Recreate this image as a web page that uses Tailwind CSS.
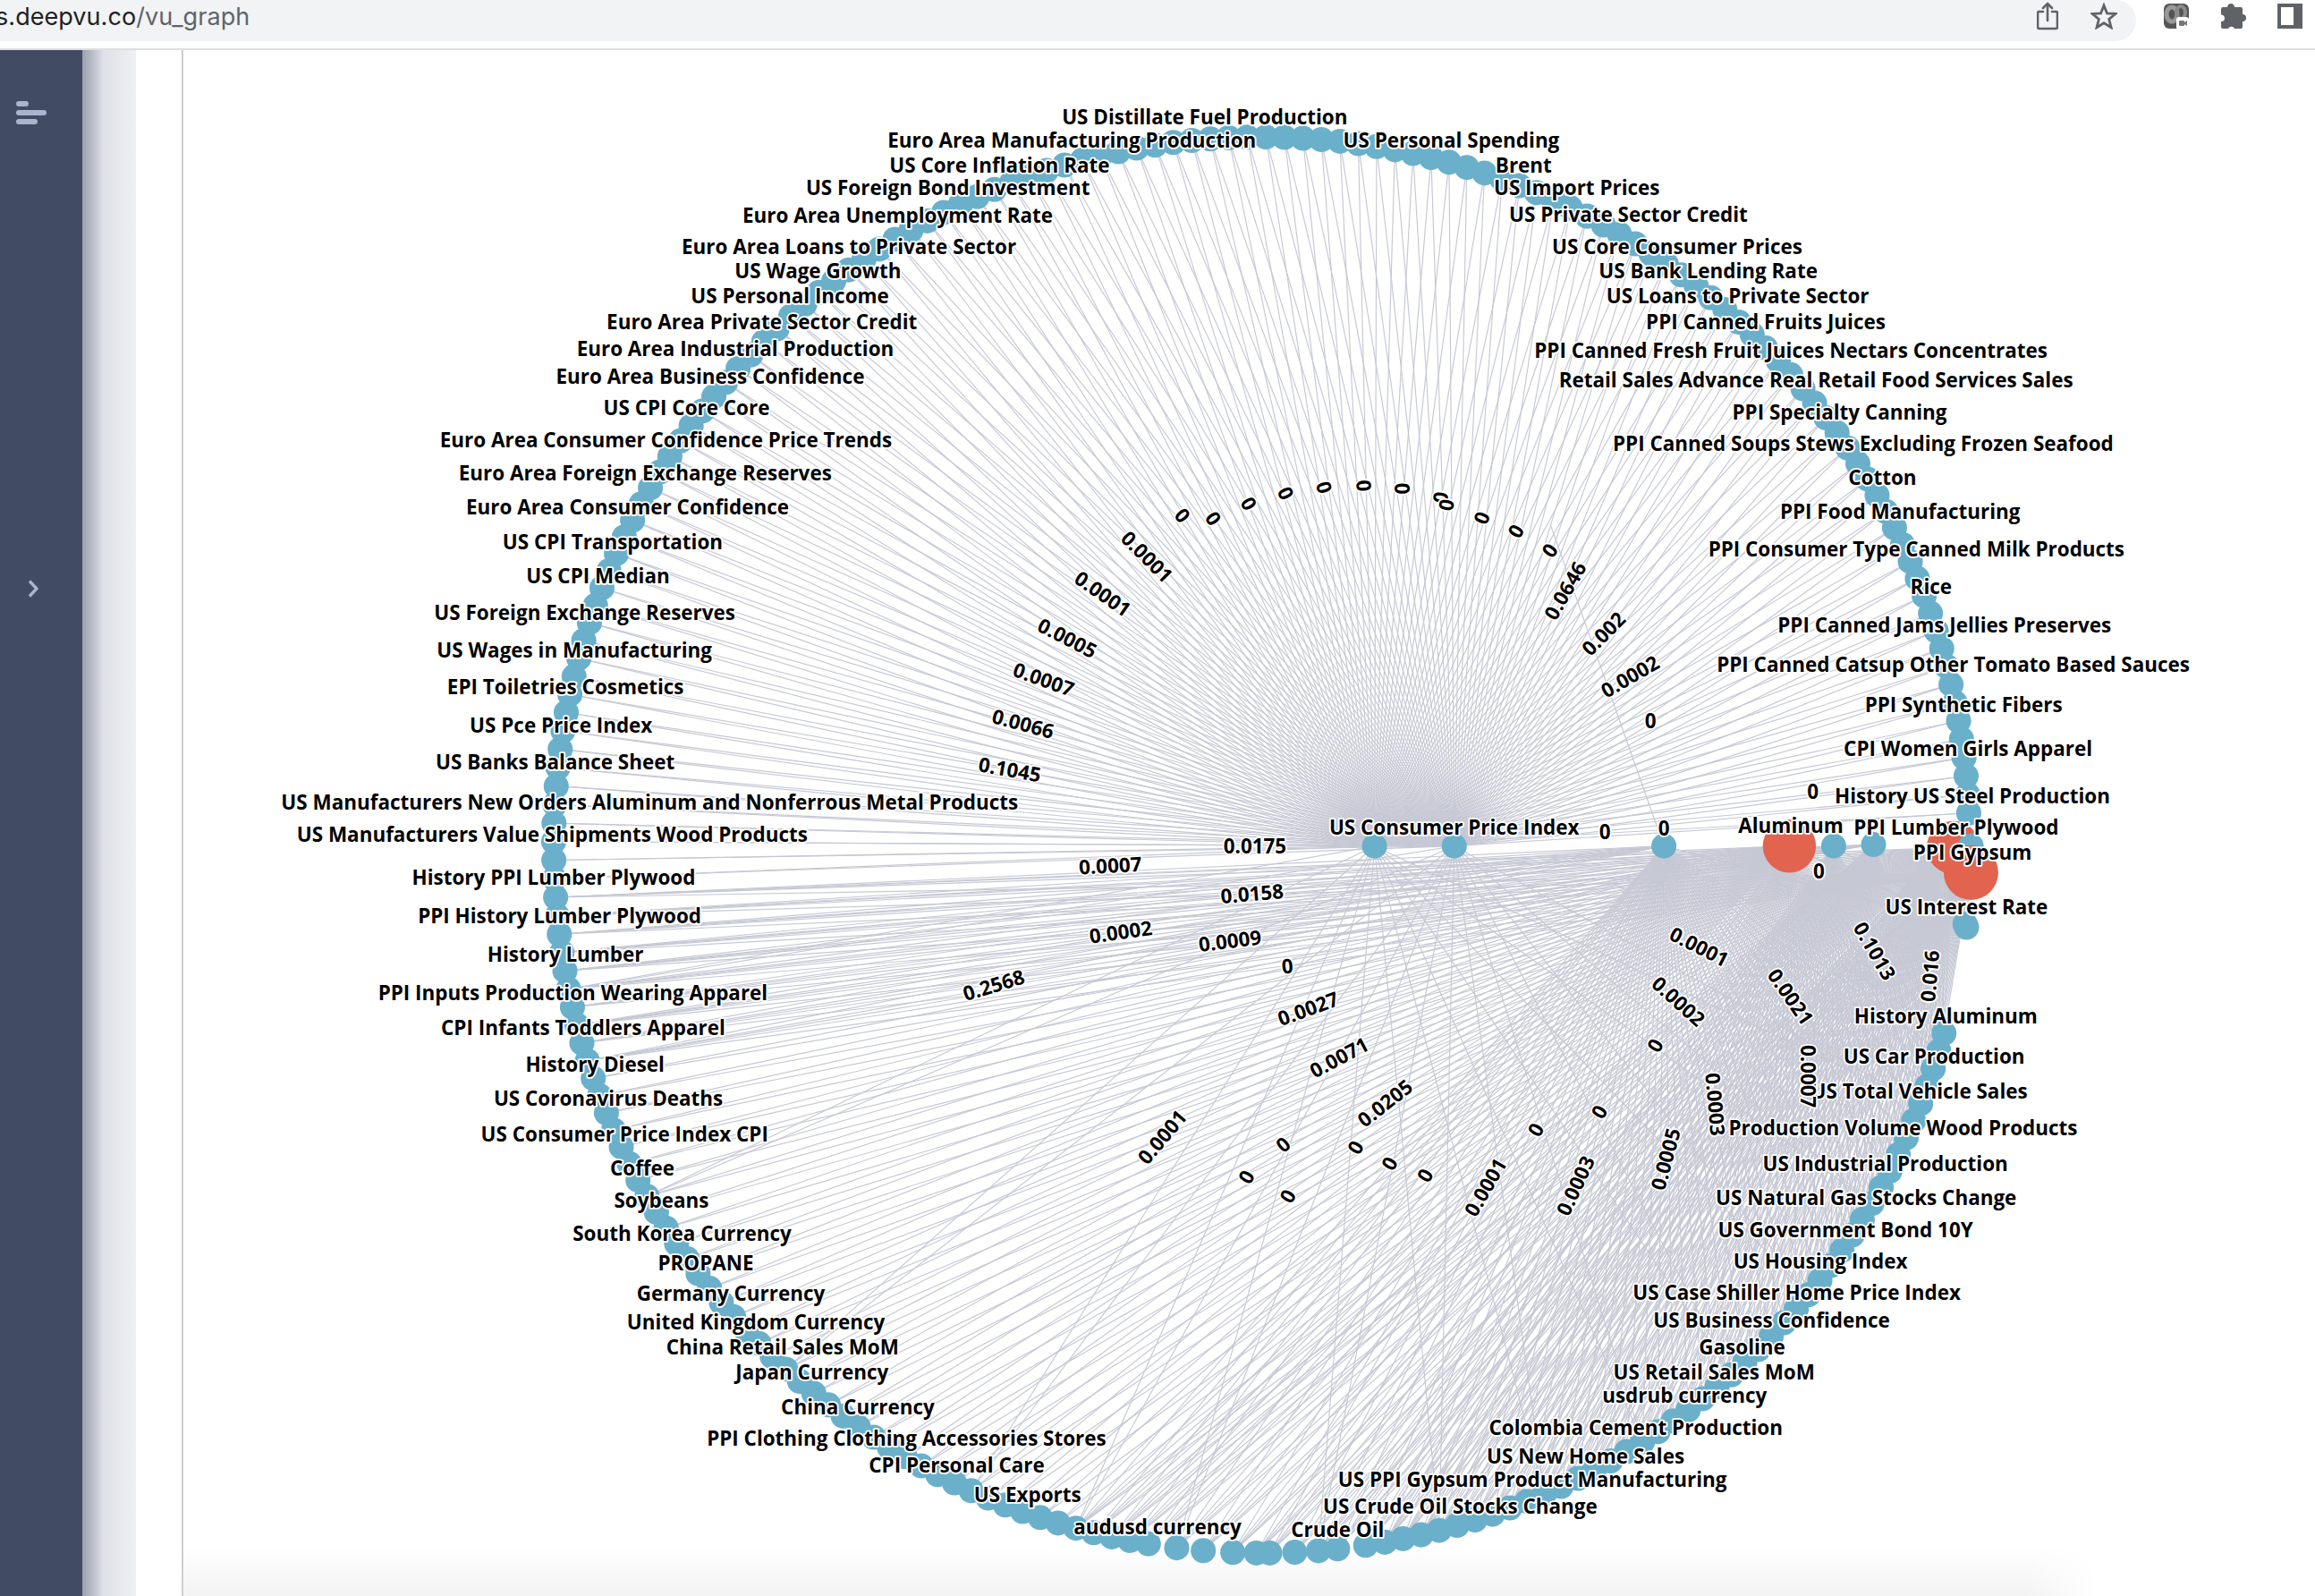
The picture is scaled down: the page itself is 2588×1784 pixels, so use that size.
<!DOCTYPE html>
<html lang="en">
<head>
<meta charset="utf-8">
<title>vu_graph</title>
<script src="https://cdn.jsdelivr.net/npm/@tailwindcss/browser@4"></script>
</head>
<body class="bg-white overflow-hidden">
<div class="flex flex-col w-[2588px] h-[1784px] overflow-hidden">
  <header class="h-[56px] shrink-0 bg-white border-b-2 border-[#dedede] flex pb-[8px]">
    <div class="w-[2388px] h-[46px] bg-[#f1f3f4] rounded-r-[23px] flex items-center justify-between overflow-hidden">
      <div class="text-[27px] leading-[36px] -ml-[5px] -mt-[8px] tracking-[0.05px] text-[#5f6368] font-['Inter',sans-serif] whitespace-nowrap"><span class="text-[#202124]">s.deepvu.co</span>/vu_graph</div>
      <div class="flex items-center gap-[36px] pr-[21px] -mt-[10px]">
        <svg width="24" height="32" viewBox="0 0 24 32" fill="none" class="text-[#5f6368]" stroke="currentColor" stroke-width="2.6" stroke-linecap="round" stroke-linejoin="round"><path d="M7 11H2.500a1.500 1.500 0 0 0-1.500 1.500V28a2 2 0 0 0 2 2h18a2 2 0 0 0 2-2V12.500A1.500 1.500 0 0 0 21.500 11H17"/><path d="M12 21V2M7 7l5-5 5 5"/></svg>
        <svg width="30" height="30" viewBox="0 0 30 30" fill="none" class="text-[#5f6368]" stroke="currentColor" stroke-width="2.8" stroke-linejoin="miter"><path d="M15 3l3.500 8.800 9.500.6-7.300 6.100 2.400 9.200L15 22.700 7 27.700l2.400-9.200-7.300-6.100 9.500-.6z"/></svg>
      </div>
    </div>
    <div class="flex-1 flex items-start pt-[4px] pl-[30px] gap-[36px]">
      <svg width="30" height="30" viewBox="0 0 30 30"><rect x="1" y="0" width="28" height="28" rx="6" fill="#555"/><ellipse cx="10" cy="12" rx="6" ry="8" fill="none" stroke="#999" stroke-width="5"/><ellipse cx="20" cy="10" rx="5" ry="7" fill="none" stroke="#8a8a8a" stroke-width="4"/><rect x="15" y="15" width="14" height="14" rx="3" fill="#fff"/><rect x="18" y="19" width="6" height="6" rx="1" fill="#777"/><path d="M24 21l3-2v6l-3-2z" fill="#777"/></svg>
      <svg width="30" height="30" viewBox="0 0 30 30" class="text-[#5f6368] -ml-[2px]"><path fill="currentColor" d="M12 0c2.500 0 4 1.800 4 4h7a2 2 0 0 1 2 2v6a4 4 0 1 1 0 8v6a2 2 0 0 1-2 2h-7a3.800 3.800 0 0 0-7 0H3a2 2 0 0 1-2-2v-6c3 0 4-2 4-3.500S4 12.500 1 12.500V6a2 2 0 0 1 2-2h5c0-2.200 1.500-4 4-4z"/></svg>
      <div class="w-[28px] h-[28px] bg-[#5f6368] pl-[4px] pt-[4px] -ml-[2px]"><div class="w-[14px] h-[20px] bg-white"></div></div>
    </div>
  </header>
  <div class="flex-1 flex min-h-0">
    <aside class="w-[92px] shrink-0 bg-[#414c63] flex flex-col items-start pl-[18px] pt-[57px]">
      <svg width="34" height="26" viewBox="0 0 34 26" fill="#a9b4cf"><rect width="14" height="6" rx="3"/><rect y="10" width="34" height="6" rx="3"/><rect y="20" width="24" height="6" rx="3"/></svg>
      <svg width="12" height="20" viewBox="0 0 12 20" fill="none" stroke="#a9b4cf" stroke-width="3.400" class="mt-[509px] ml-[13px]"><path d="M2 1.500L10 10 2 18.500"/></svg>
    </aside>
    <div class="w-[60px] shrink-0 bg-linear-to-r from-[#9aa0af] via-[#dfe1e8] via-40% to-[#eef0f4]"></div>
    <div class="w-[51px] shrink-0 bg-white"></div>
    <main class="flex-1 relative border-l-2 border-[#cfcfcf] overflow-hidden">
      <div class="absolute bottom-0 left-0 w-[2140px] h-[56px] bg-linear-to-b from-white to-[#f3f3f3]"></div>
      <div class="absolute bottom-0 left-[2060px] w-[80px] h-[56px] bg-linear-to-r from-transparent to-white"></div>
      <svg class="absolute left-0 top-0 w-[2383px] h-[1728px]" viewBox="124.2 33.93 1443.8 1047">
        <g id="edges" fill="none" stroke="#c6c8d4" stroke-width="0.7"></g>
        <g id="nodes" fill="#6bb0ca"></g>
        <g class="fill-black stroke-white [stroke-width:2.2] [paint-order:stroke] [stroke-linejoin:round] [text-anchor:middle] [dominant-baseline:central] text-[13.6px] font-bold font-['Open_Sans',sans-serif]">
          <g>
            <text x="816" y="79">US Distillate Fuel Production</text>
            <text x="726" y="95">Euro Area Manufacturing Production</text>
            <text x="983" y="95">US Personal Spending</text>
            <text x="677" y="112">US Core Inflation Rate</text>
            <text x="1032" y="112">Brent</text>
            <text x="642" y="127">US Foreign Bond Investment</text>
            <text x="1068" y="127">US Import Prices</text>
            <text x="608" y="146">Euro Area Unemployment Rate</text>
            <text x="1103" y="145">US Private Sector Credit</text>
            <text x="575" y="167">Euro Area Loans to Private Sector</text>
            <text x="1136" y="167">US Core Consumer Prices</text>
            <text x="554" y="183">US Wage Growth</text>
            <text x="1157" y="183">US Bank Lending Rate</text>
            <text x="535" y="200">US Personal Income</text>
            <text x="1177" y="200">US Loans to Private Sector</text>
            <text x="516" y="218">Euro Area Private Sector Credit</text>
            <text x="1196" y="218">PPI Canned Fruits Juices</text>
            <text x="498" y="236">Euro Area Industrial Production</text>
            <text x="1213" y="237">PPI Canned Fresh Fruit Juices Nectars Concentrates</text>
            <text x="481" y="255">Euro Area Business Confidence</text>
            <text x="1230" y="257">Retail Sales Advance Real Retail Food Services Sales</text>
            <text x="465" y="276">US CPI Core Core</text>
            <text x="1246" y="279">PPI Specialty Canning</text>
            <text x="451" y="298">Euro Area Consumer Confidence Price Trends</text>
            <text x="1262" y="300">PPI Canned Soups Stews Excluding Frozen Seafood</text>
            <text x="437" y="320">Euro Area Foreign Exchange Reserves</text>
            <text x="1275" y="323">Cotton</text>
            <text x="425" y="343">Euro Area Consumer Confidence</text>
            <text x="1287" y="346">PPI Food Manufacturing</text>
            <text x="415" y="367">US CPI Transportation</text>
            <text x="1298" y="372">PPI Consumer Type Canned Milk Products</text>
            <text x="405" y="390">US CPI Median</text>
            <text x="1308" y="397">Rice</text>
            <text x="396" y="415">US Foreign Exchange Reserves</text>
            <text x="1317" y="423">PPI Canned Jams Jellies Preserves</text>
            <text x="389" y="440">US Wages in Manufacturing</text>
            <text x="1323" y="450">PPI Canned Catsup Other Tomato Based Sauces</text>
            <text x="383" y="465">EPI Toiletries Cosmetics</text>
            <text x="1330" y="477">PPI Synthetic Fibers</text>
            <text x="380" y="491">US Pce Price Index</text>
            <text x="1333" y="507">CPI Women Girls Apparel</text>
            <text x="376" y="516">US Banks Balance Sheet</text>
            <text x="1336" y="539">History US Steel Production</text>
            <text x="440" y="543">US Manufacturers New Orders Aluminum and Nonferrous Metal Products</text>
            <text x="374" y="565">US Manufacturers Value Shipments Wood Products</text>
            <text x="375" y="594">History PPI Lumber Plywood</text>
            <text x="379" y="620">PPI History Lumber Plywood</text>
            <text x="383" y="646">History Lumber</text>
            <text x="388" y="672">PPI Inputs Production Wearing Apparel</text>
            <text x="395" y="696">CPI Infants Toddlers Apparel</text>
            <text x="403" y="721">History Diesel</text>
            <text x="412" y="744">US Coronavirus Deaths</text>
            <text x="423" y="768">US Consumer Price Index CPI</text>
            <text x="435" y="791">Coffee</text>
            <text x="448" y="813">Soybeans</text>
            <text x="462" y="835">South Korea Currency</text>
            <text x="478" y="855">PROPANE</text>
            <text x="495" y="876">Germany Currency</text>
            <text x="512" y="895">United Kingdom Currency</text>
            <text x="530" y="912">China Retail Sales MoM</text>
            <text x="550" y="929">Japan Currency</text>
            <text x="581" y="953">China Currency</text>
            <text x="614" y="974">PPI Clothing Clothing Accessories Stores</text>
            <text x="648" y="992">CPI Personal Care</text>
            <text x="696" y="1012">US Exports</text>
            <text x="784" y="1034">audusd currency</text>
            <text x="906" y="1036">Crude Oil</text>
            <text x="989" y="1020">US Crude Oil Stocks Change</text>
            <text x="1038" y="1002">US PPI Gypsum Product Manufacturing</text>
            <text x="1074" y="986">US New Home Sales</text>
            <text x="1108" y="967">Colombia Cement Production</text>
            <text x="1141" y="945">usdrub currency</text>
            <text x="1161" y="929">US Retail Sales MoM</text>
            <text x="1180" y="912">Gasoline</text>
            <text x="1200" y="894">US Business Confidence</text>
            <text x="1217" y="875">US Case Shiller Home Price Index</text>
            <text x="1233" y="854">US Housing Index</text>
            <text x="1250" y="833">US Government Bond 10Y</text>
            <text x="1264" y="811">US Natural Gas Stocks Change</text>
            <text x="1277" y="788">US Industrial Production</text>
            <text x="1289" y="764">Production Volume Wood Products</text>
            <text x="1300" y="739">US Total Vehicle Sales</text>
            <text x="1310" y="715">US Car Production</text>
            <text x="1318" y="688">History Aluminum</text>
            <text x="1332" y="614">US Interest Rate</text>
            <text x="1325" y="560">PPI Lumber Plywood</text>
            <text x="1336" y="577">PPI Gypsum</text>
            <text x="1213" y="559">Aluminum</text>
            <text x="985" y="560">US Consumer Price Index</text>
            <text x="1127" y="561">0</text>
          </g>
          <g>
            <text x="801" y="349" transform="rotate(50 801 349)">0</text>
            <text x="822" y="351" transform="rotate(55 822 351)">0</text>
            <text x="846" y="341" transform="rotate(60 846 341)">0</text>
            <text x="871" y="334" transform="rotate(65 871 334)">0</text>
            <text x="897" y="330" transform="rotate(75 897 330)">0</text>
            <text x="924" y="329" transform="rotate(85 924 329)">0</text>
            <text x="950" y="331" transform="rotate(90 950 331)">0</text>
            <text x="976" y="337" transform="rotate(100 976 337)">0</text>
            <text x="980" y="342" transform="rotate(100 980 342)">0</text>
            <text x="1004" y="351" transform="rotate(110 1004 351)">0</text>
            <text x="1027" y="360" transform="rotate(120 1027 360)">0</text>
            <text x="1050" y="373" transform="rotate(125 1050 373)">0</text>
            <text x="777" y="377" transform="rotate(45 777 377)">0.0001</text>
            <text x="747" y="402" transform="rotate(35 747 402)">0.0001</text>
            <text x="723" y="432" transform="rotate(27 723 432)">0.0005</text>
            <text x="707" y="460" transform="rotate(20 707 460)">0.0007</text>
            <text x="693" y="490" transform="rotate(15 693 490)">0.0066</text>
            <text x="684" y="521" transform="rotate(10 684 521)">0.1045</text>
            <text x="1060" y="400" transform="rotate(-60 1060 400)">0.0646</text>
            <text x="1086" y="429" transform="rotate(-45 1086 429)">0.002</text>
            <text x="1104" y="458" transform="rotate(-30 1104 458)">0.0002</text>
            <text x="1118" y="488">0</text>
            <text x="1228" y="536">0</text>
            <text x="1087" y="563">0</text>
            <text x="1232" y="590">0</text>
            <text x="850" y="573">0.0175</text>
            <text x="848" y="605" transform="rotate(-5 848 605)">0.0158</text>
            <text x="752" y="586" transform="rotate(-3 752 586)">0.0007</text>
            <text x="759" y="631" transform="rotate(-8 759 631)">0.0002</text>
            <text x="833" y="637" transform="rotate(-7 833 637)">0.0009</text>
            <text x="673" y="667" transform="rotate(-17 673 667)">0.2568</text>
            <text x="872" y="654" transform="rotate(-5 872 654)">0</text>
            <text x="886" y="683" transform="rotate(-20 886 683)">0.0027</text>
            <text x="907" y="716" transform="rotate(-28 907 716)">0.0071</text>
            <text x="938" y="747" transform="rotate(-38 938 747)">0.0205</text>
            <text x="787" y="770" transform="rotate(-50 787 770)">0.0001</text>
            <text x="869" y="775" transform="rotate(-40 869 775)">0</text>
            <text x="918" y="777" transform="rotate(-60 918 777)">0</text>
            <text x="941" y="788" transform="rotate(-60 941 788)">0</text>
            <text x="965" y="796" transform="rotate(-60 965 796)">0</text>
            <text x="844" y="797" transform="rotate(-60 844 797)">0</text>
            <text x="872" y="810" transform="rotate(-60 872 810)">0</text>
            <text x="1006" y="804" transform="rotate(-60 1006 804)">0.0001</text>
            <text x="1040" y="765" transform="rotate(-60 1040 765)">0</text>
            <text x="1067" y="803" transform="rotate(-65 1067 803)">0.0003</text>
            <text x="1083" y="753" transform="rotate(-60 1083 753)">0</text>
            <text x="1128" y="785" transform="rotate(-75 1128 785)">0.0005</text>
            <text x="1121" y="708" transform="rotate(-60 1121 708)">0</text>
            <text x="1162" y="748" transform="rotate(85 1162 748)">0.0003</text>
            <text x="1225" y="729" transform="rotate(90 1225 729)">0.0007</text>
            <text x="1137" y="678" transform="rotate(42 1137 678)">0.0002</text>
            <text x="1151" y="641" transform="rotate(27 1151 641)">0.0001</text>
            <text x="1213" y="675" transform="rotate(55 1213 675)">0.0021</text>
            <text x="1270" y="644" transform="rotate(60 1270 644)">0.1013</text>
            <text x="1307" y="661" transform="rotate(-85 1307 661)">0.016</text>
          </g>
        </g>
      </svg>
    </main>
  </div>
</div>
<script>
(function () {
  var NS = 'http://www.w3.org/2000/svg';
  var cx = 854.5, cy = 572.3, R = 479.5, step = 0.0262;
  var circle = [];
  // bottom of the ring, where the spacing is irregular (x positions)
  var bottom = [797, 815, 835, 851, 860, 877, 893, 906, 925];
  bottom.forEach(function (x) {
    circle.push({ x: x, y: cy + Math.sqrt(R * R - (x - cx) * (x - cx)) });
  });
  // walk round the ring from the bottom right, clockwise on screen to bottom left
  for (var a = Math.asin((938 - cx) / R); a < 2 * Math.PI - Math.asin((cx - 785) / R); a += step) {
    var x = cx + R * Math.sin(a), y = cy + R * Math.cos(a);
    if (x > cx && y > 560 && y < 620) continue;
    if (x > cx && y > 636 && y < 696) continue;
    circle.push({ x: x, y: y });
  }
  circle.push({ x: 1332, y: 628 });
  var A = { x: 931, y: 573 }, B = { x: 985, y: 573 };
  var row = [{ x: 1127, y: 573 }, { x: 1212, y: 573 }, { x: 1242, y: 573 }, { x: 1269, y: 572 }, { x: 1314, y: 573 }, { x: 1323, y: 574 }, { x: 1335, y: 573 }, { x: 1335, y: 591 }];
  var edges = document.getElementById('edges'), nodes = document.getElementById('nodes');
  function line(p, q) {
    var l = document.createElementNS(NS, 'line');
    l.setAttribute('x1', p.x.toFixed(1)); l.setAttribute('y1', p.y.toFixed(1));
    l.setAttribute('x2', q.x.toFixed(1)); l.setAttribute('y2', q.y.toFixed(1));
    edges.appendChild(l);
  }
  function dot(p, r, fill) {
    var c = document.createElementNS(NS, 'circle');
    c.setAttribute('cx', p.x.toFixed(1)); c.setAttribute('cy', p.y.toFixed(1)); c.setAttribute('r', r);
    if (fill) c.setAttribute('fill', fill);
    nodes.appendChild(c);
  }
  var mid = [0, 1, 3, 5, 7], full = [0, 1, 2, 3, 4, 5, 7];
  circle.forEach(function (p, i) {
    if (p.y <= 600) { line(p, A); line(p, B); return; }
    if (p.x < 720) {
      line(p, row[1]); line(p, row[5]);
      if (p.y < 720) { line(p, row[0]); line(p, row[3]); line(p, row[7]); }
      if (i % 12 === 0) { line(p, A); line(p, B); }
    } else {
      (p.x < 880 ? mid : full).forEach(function (k) { line(p, row[k]); });
      if (i % 6 === 0) { line(p, A); line(p, B); }
    }
  });
  line({ x: 1050, y: 355 }, row[0]);
  circle.forEach(function (p) { dot(p, 8.5); });
  [row[0], row[2], row[3], row[4], row[6], A, B].forEach(function (p) { dot(p, 8.5); });
  dot(row[5], 18, '#e2644f'); dot(row[1], 18, '#e2644f'); dot(row[6], 8.5); dot(row[7], 18.5, '#e2644f');
})();
</script>
</body>
</html>
